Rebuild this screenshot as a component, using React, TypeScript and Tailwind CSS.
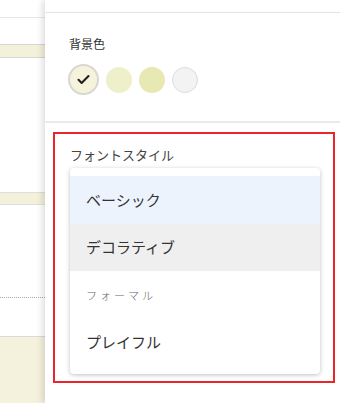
import React from 'react'

const swatches = [
  { color: 'bg-[#f5f3dc]', selected: true },
  { color: 'bg-[#eef0c9]', selected: false },
  { color: 'bg-[#e8e8b2]', selected: false },
  { color: 'bg-[#f3f3f3] border border-[#dcdcdc]', selected: false }
]

const fontOptions = [
  { label: 'ベーシック', state: 'active' },
  { label: 'デコラティブ', state: 'hover' },
  { label: 'フォーマル', state: 'formal' },
  { label: 'プレイフル', state: 'none' }
]

function BackgroundStrip() {
  return (
    <div className="w-[45px] shrink-0 flex flex-col bg-white">
      <div className="h-[18px] border-b border-[#e6e6e6]" />
      <div className="h-[26px]" />
      <div className="h-[14px] bg-[#f3f1d9] border-y border-[#d6d6d6]" />
      <div className="h-[134px]" />
      <div className="h-[13px] bg-[#f3f1d9] border-y border-[#dedede]" />
      <div className="h-[93px] border-b border-dotted border-[#aaaaaa]" />
      <div className="h-[39px] border-b border-[#dadada]" />
      <div className="flex-1 bg-[#f4f2dc]" />
    </div>
  )
}

export default function App() {
  return (
    <div
      className="w-[340px] h-[403px] flex overflow-hidden bg-white"
      style={{ fontFamily: '"Noto Sans CJK JP", "Noto Sans", sans-serif' }}
    >
      <BackgroundStrip />

      <div className="flex-1 flex flex-col bg-white shadow-[-3px_0_6px_rgba(0,0,0,0.12)] z-10">
        {/* ヘッダー下端 */}
        <div className="h-[13px] border-b border-[#e3e3e3]" />

        {/* 背景色 */}
        <div className="h-[110px] pl-[24px] pt-[22px] border-b-2 border-[#ebebeb]">
          <div className="text-[12px] leading-[18px] text-[#333]">背景色</div>
          <div className="flex items-center gap-[7px] mt-[11px] -ml-[1px]">
            {swatches.map((s, i) => (
              <div
                key={i}
                className={`rounded-full flex items-center justify-center ${s.color} ${
                  s.selected ? 'w-[31px] h-[31px] border-2 border-[#d8d8d0]' : 'w-[26px] h-[26px]'
                }`}
              >
                {s.selected && (
                  <svg width="15" height="15" viewBox="0 0 24 24" fill="none">
                    <path d="M4 12.5l5 5L20 6.5" stroke="#222" strokeWidth="3.4" strokeLinecap="round" strokeLinejoin="round" />
                  </svg>
                )}
              </div>
            ))}
          </div>
        </div>

        {/* フォントスタイル */}
        <div className="mt-[9px] ml-[8px] mr-[5px] h-[251px] border-2 border-[#e8262b] pl-[15px] pt-[12px]">
          <div className="text-[13px] leading-[18px] text-[#444]">フォントスタイル</div>
          <div className="mt-[4px] w-[250px] bg-white rounded-[4px] py-[8px] shadow-[0_1px_4px_rgba(0,0,0,0.25)]">
            {fontOptions.map((o) => (
              <div
                key={o.label}
                className={`h-[47.5px] flex items-center pl-[16px] ${
                  o.state === 'active' ? 'bg-[#edf3fd]' : o.state === 'hover' ? 'bg-[#efefef]' : 'bg-white'
                }`}
              >
                {o.state === 'formal' ? (
                  <span className="text-[11px] tracking-[3px] text-[#5f6470] font-light">{o.label}</span>
                ) : (
                  <span className="text-[15px] text-[#333]">{o.label}</span>
                )}
              </div>
            ))}
          </div>
        </div>
      </div>
    </div>
  )
}
